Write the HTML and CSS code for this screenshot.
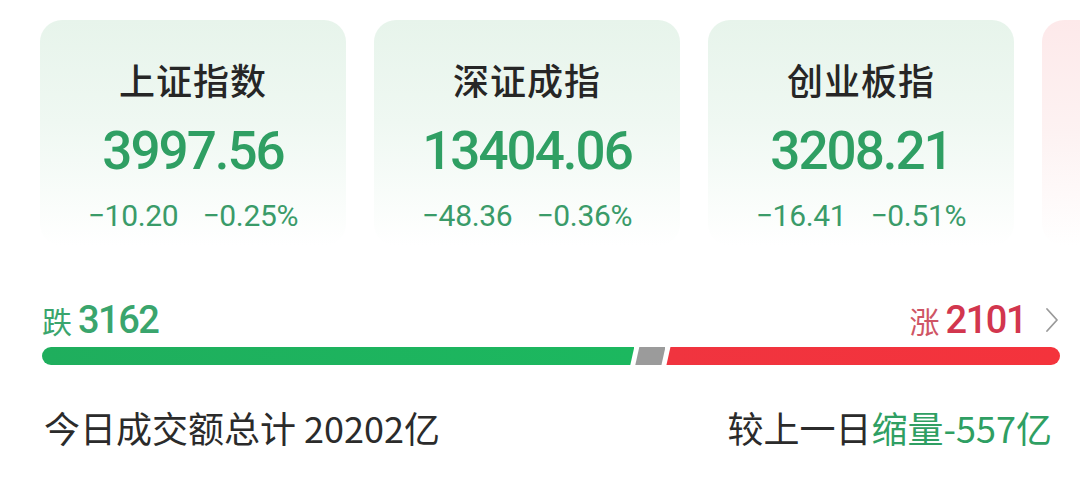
FILE: index.html
```html
<!DOCTYPE html>
<html lang="zh-CN">
<head>
<meta charset="utf-8">
<link rel="stylesheet" href="styles.css">
</head>
<body>
<div class="page">
  <div class="cards">
    <div class="card down">
      <div class="card-title">上证指数</div>
      <div class="card-value">3997.56</div>
      <div class="card-change"><span>−10.20</span><span>−0.25%</span></div>
    </div>
    <div class="card down">
      <div class="card-title">深证成指</div>
      <div class="card-value">13404.06</div>
      <div class="card-change"><span>−48.36</span><span>−0.36%</span></div>
    </div>
    <div class="card down">
      <div class="card-title">创业板指</div>
      <div class="card-value">3208.21</div>
      <div class="card-change"><span>−16.41</span><span>−0.51%</span></div>
    </div>
    <div class="card up"></div>
  </div>

  <div class="breadth">
    <div class="count fall"><span class="count-label">跌</span><span class="count-num">3162</span></div>
    <div class="count rise"><span class="count-label">涨</span><span class="count-num">2101</span>
      <svg class="chev" width="16" height="28" viewBox="0 0 16 28"><path d="M3 3 L13 14 L3 25" fill="none" stroke="#9a9a9a" stroke-width="1.8" stroke-linecap="round" stroke-linejoin="round"/></svg>
    </div>
  </div>

  <div class="bar">
    <div class="seg seg-fall" style="flex-grow:3162"></div>
    <div class="seg seg-flat" style="flex-grow:161"></div>
    <div class="seg seg-rise" style="flex-grow:2101"></div>
  </div>

  <div class="volume">
    <div class="vol-left">今日成交额总计 20202亿</div>
    <div class="vol-right">较上一日<span class="green">缩量-557亿</span></div>
  </div>
</div>
</body>
</html>
```

FILE: styles.css
```css
* { box-sizing: border-box; }
html, body {
  margin: 0;
  padding: 0;
  background: #ffffff;
}
body {
  width: 1080px;
  height: 498px;
  overflow: hidden;
  font-family: "Noto Sans CJK SC", "Noto Sans", sans-serif;
}
.page {
  padding: 20px 20px 0 42px;
}
.cards {
  display: flex;
  gap: 28px;
  margin-left: -2px;
  width: 1060px;
  overflow: hidden;
}
.card {
  flex: 0 0 306px;
  height: 226px;
  border-radius: 22px;
  padding-top: 41px;
  display: flex;
  flex-direction: column;
  align-items: center;
}
.card.down {
  background: linear-gradient(180deg, #e7f4eb 0%, #eff8f2 45%, #ffffff 100%);
}
.card.up {
  background: linear-gradient(180deg, #fde9ea 0%, #fdf2f2 50%, #ffffff 100%);
}
.card-title {
  font-size: 36px;
  line-height: 36px;
  font-weight: 500;
  color: #262626;
  letter-spacing: 1px;
}
.card-value {
  margin-top: 28px;
  font-family: Roboto, "Noto Sans", sans-serif;
  font-size: 53px;
  line-height: 52px;
  font-weight: 500;
  color: #2f9f63;
  letter-spacing: -2px;
}
.card-change {
  margin-top: 24px;
  display: flex;
  gap: 24px;
  font-family: Roboto, "Noto Sans", sans-serif;
  font-size: 30px;
  line-height: 30px;
  color: #3a9b69;
  letter-spacing: -0.3px;
}
.breadth {
  margin-top: 52px;
  display: flex;
  justify-content: space-between;
  align-items: flex-end;
  width: 1018px;
  height: 40px;
}
.count {
  display: flex;
  align-items: baseline;
  gap: 6px;
}
.count-label {
  font-size: 30px;
  line-height: 36px;
}
.count-num {
  font-family: Roboto, "Noto Sans", sans-serif;
  font-size: 38px;
  line-height: 36px;
  font-weight: 500;
  letter-spacing: -1.5px;
}
.fall { color: #3aa56d; }
.rise { color: #d2364e; }
.rise .count-label { color: #cf5565; }
.chev {
  margin-left: 12px;
  align-self: center;
}
.bar {
  margin-top: 9px;
  width: 1018px;
  height: 18px;
  border-radius: 9px;
  overflow: hidden;
  display: flex;
  gap: 3px;
}
.seg {
  flex-basis: 0;
  height: 100%;
}
.seg-fall {
  background: linear-gradient(90deg, #1fae5d, #1cb85f);
  clip-path: polygon(0 0, 100% 0, calc(100% - 4px) 100%, 0 100%);
  margin-right: -2px;
}
.seg-flat {
  background: #9b9b9b;
  clip-path: polygon(4px 0, 100% 0, calc(100% - 4px) 100%, 0 100%);
  margin-right: -2px;
}
.seg-rise {
  background: linear-gradient(90deg, #f0343f, #f4333c);
  clip-path: polygon(4px 0, 100% 0, 100% 100%, 0 100%);
}
.volume {
  margin-top: 42px;
  width: 1010px;
  display: flex;
  justify-content: space-between;
  font-size: 36px;
  line-height: 40px;
  color: #2b2b2b;
}
.vol-left { margin-left: 2px; }
.green { color: #2f9f63; }
```
